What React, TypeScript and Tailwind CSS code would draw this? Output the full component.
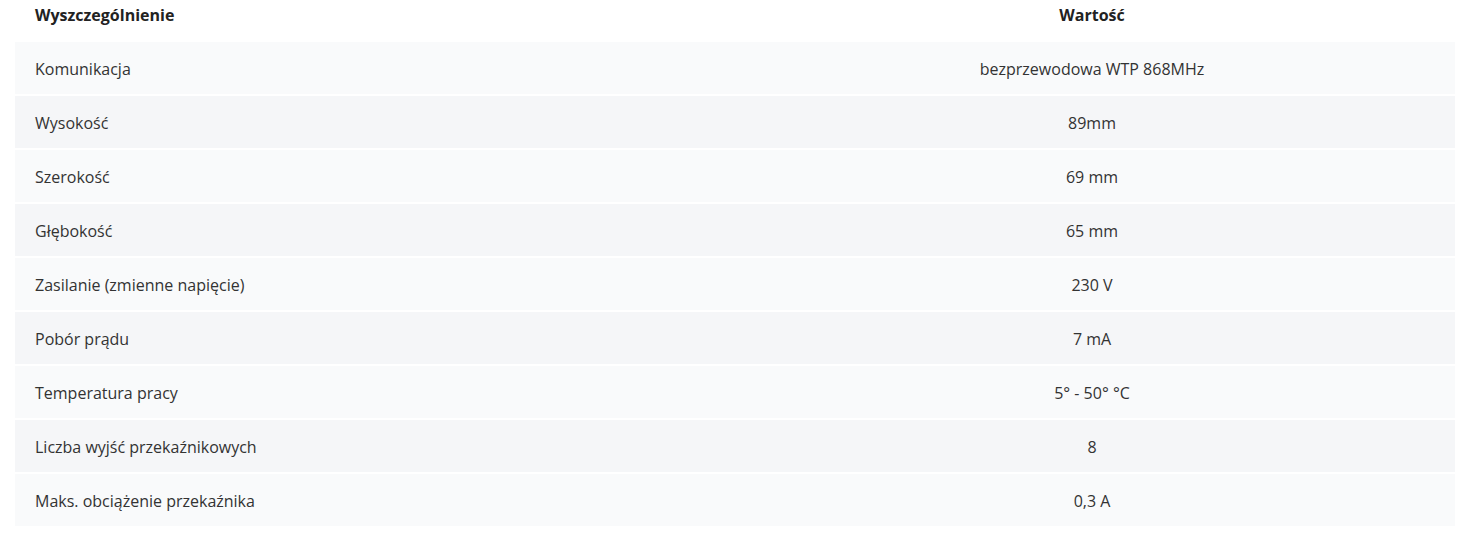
import React from "react";

const rows: [string, string][] = [
  ["Komunikacja", "bezprzewodowa WTP 868MHz"],
  ["Wysokość", "89mm"],
  ["Szerokość", "69 mm"],
  ["Głębokość", "65 mm"],
  ["Zasilanie (zmienne napięcie)", "230 V"],
  ["Pobór prądu", "7 mA"],
  ["Temperatura pracy", "5° - 50° °C"],
  ["Liczba wyjść przekaźnikowych", "8"],
  ["Maks. obciążenie przekaźnika", "0,3 A"],
];

export default function App() {
  return (
    <div
      className="w-[1459px] h-[549px] bg-white overflow-hidden"
      style={{ fontFamily: '"Open Sans", "Noto Sans", sans-serif' }}
    >
      <div className="ml-[15px] w-[1440px]">
        <div className="grid grid-cols-[714px_1fr] h-[42px] items-start pt-[3px] text-[16px] font-bold text-[#222]">
          <div className="pl-[20px] leading-[24px]">Wyszczególnienie</div>
          <div className="text-center leading-[24px]">Wartość</div>
        </div>
        <div className="flex flex-col">
          {rows.map(([k, v], i) => (
            <div
              key={k}
              className={
                "grid grid-cols-[714px_1fr] h-[54px] items-center border-b-2 border-white text-[16px] text-[#333] " +
                (i % 2 === 0 ? "bg-[#f9fafb]" : "bg-[#f5f6f8]")
              }
            >
              <div className="pl-[20px] pt-[2px]">{k}</div>
              <div className="text-center pt-[2px]">{v}</div>
            </div>
          ))}
        </div>
      </div>
    </div>
  );
}
